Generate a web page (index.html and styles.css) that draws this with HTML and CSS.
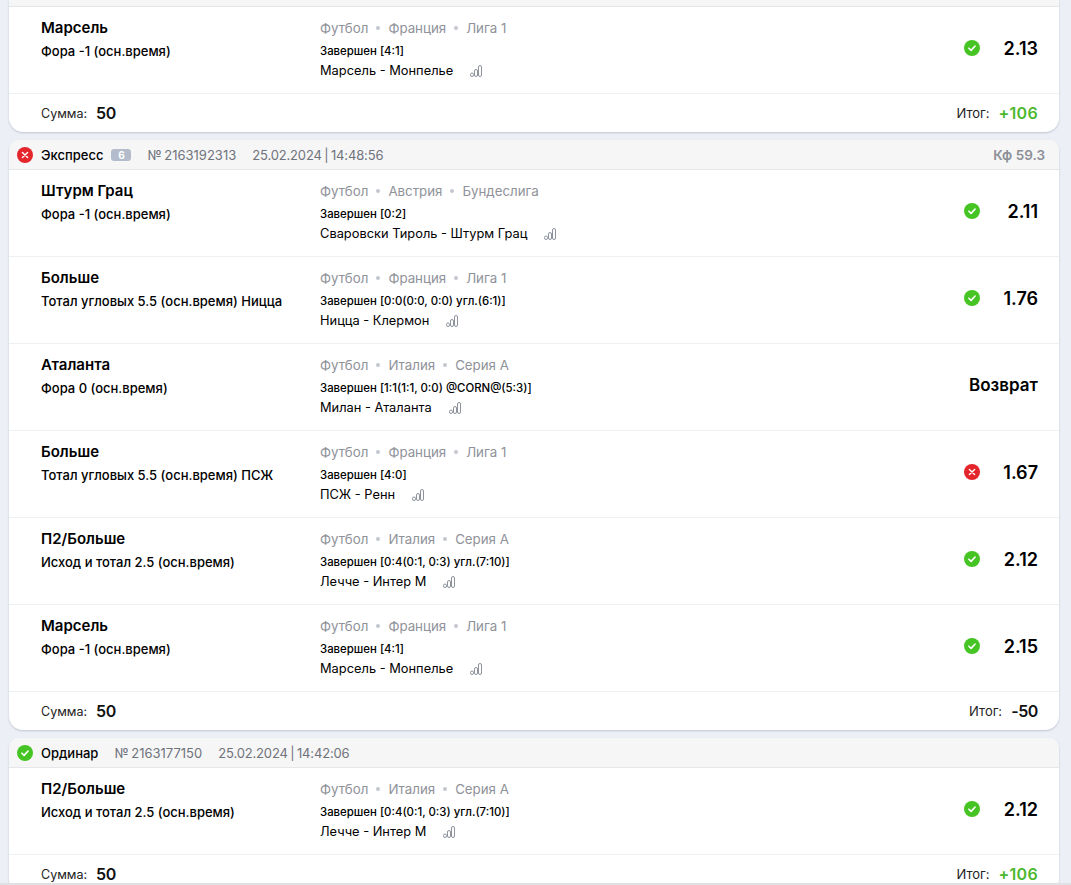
FILE: index.html
```html
<!DOCTYPE html>
<html lang="ru">
<head>
    <meta charset="UTF-8">
    <title>История ставок</title>
    <link rel="stylesheet" href="styles.css">
</head>
<body>
    <svg class="defs" width="0" height="0">
        <symbol id="win" viewBox="0 0 16 16">
            <circle cx="8" cy="8" r="8" fill="#46c423"/>
            <path d="M4.9 8.2l2.2 2.2 4-4.4" fill="none" stroke="#fff" stroke-width="1.6" stroke-linecap="round" stroke-linejoin="round"/>
        </symbol>
        <symbol id="lose" viewBox="0 0 16 16">
            <circle cx="8" cy="8" r="8" fill="#e4252b"/>
            <path d="M5.4 5.4l5.2 5.2M10.6 5.4l-5.2 5.2" fill="none" stroke="#fff" stroke-width="1.4" stroke-linecap="round"/>
        </symbol>
        <symbol id="stats" viewBox="0 0 12 12">
            <g fill="#fff" stroke="#8d929c" stroke-width="1">
                <rect x="0.5" y="8" width="3" height="3.5" rx="1.5"/>
                <rect x="4.5" y="4.5" width="3" height="7" rx="1.5"/>
                <rect x="8.5" y="0.5" width="3" height="11" rx="1.5"/>
            </g>
        </symbol>
    </svg>

    <div class="card">
        <div class="card-head card-head-cut"></div>
        <div class="row">
            <div class="bet"><div class="bet-name">Марсель</div><div class="bet-type">Фора -1 (осн.время)</div></div>
            <div class="event">
                <div class="path"><span>Футбол</span><i></i><span>Франция</span><i></i><span>Лига 1</span></div>
                <div class="status">Завершен [4:1]</div>
                <div class="teams">Марсель - Монпелье<svg class="stats"><use href="#stats"/></svg></div>
            </div>
            <svg class="mark"><use href="#win"/></svg>
            <div class="odds">2.13</div>
        </div>
        <div class="card-foot">
            <div class="sum"><span>Сумма:</span><b>50</b></div>
            <div class="sum"><span class="sum-result">Итог:</span><b class="plus">+106</b></div>
        </div>
    </div>

    <div class="card">
        <div class="card-head">
            <svg class="mark-head"><use href="#lose"/></svg>
            <span class="kind">Экспресс</span>
            <span class="badge">6</span>
            <span class="num">№ 2163192313</span>
            <span class="date">25.02.2024 | 14:48:56</span>
            <span class="total-odds">Кф 59.3</span>
        </div>
        <div class="row">
            <div class="bet"><div class="bet-name">Штурм Грац</div><div class="bet-type">Фора -1 (осн.время)</div></div>
            <div class="event">
                <div class="path"><span>Футбол</span><i></i><span>Австрия</span><i></i><span>Бундеслига</span></div>
                <div class="status">Завершен [0:2]</div>
                <div class="teams">Сваровски Тироль - Штурм Грац<svg class="stats"><use href="#stats"/></svg></div>
            </div>
            <svg class="mark"><use href="#win"/></svg>
            <div class="odds">2.11</div>
        </div>
        <div class="row">
            <div class="bet"><div class="bet-name">Больше</div><div class="bet-type">Тотал угловых 5.5 (осн.время) Ницца</div></div>
            <div class="event">
                <div class="path"><span>Футбол</span><i></i><span>Франция</span><i></i><span>Лига 1</span></div>
                <div class="status">Завершен [0:0(0:0, 0:0) угл.(6:1)]</div>
                <div class="teams">Ницца - Клермон<svg class="stats"><use href="#stats"/></svg></div>
            </div>
            <svg class="mark"><use href="#win"/></svg>
            <div class="odds">1.76</div>
        </div>
        <div class="row">
            <div class="bet"><div class="bet-name">Аталанта</div><div class="bet-type">Фора 0 (осн.время)</div></div>
            <div class="event">
                <div class="path"><span>Футбол</span><i></i><span>Италия</span><i></i><span>Серия А</span></div>
                <div class="status">Завершен [1:1(1:1, 0:0) @CORN@(5:3)]</div>
                <div class="teams">Милан - Аталанта<svg class="stats"><use href="#stats"/></svg></div>
            </div>
            <div class="odds odds-text">Возврат</div>
        </div>
        <div class="row">
            <div class="bet"><div class="bet-name">Больше</div><div class="bet-type">Тотал угловых 5.5 (осн.время) ПСЖ</div></div>
            <div class="event">
                <div class="path"><span>Футбол</span><i></i><span>Франция</span><i></i><span>Лига 1</span></div>
                <div class="status">Завершен [4:0]</div>
                <div class="teams">ПСЖ - Ренн<svg class="stats"><use href="#stats"/></svg></div>
            </div>
            <svg class="mark"><use href="#lose"/></svg>
            <div class="odds">1.67</div>
        </div>
        <div class="row">
            <div class="bet"><div class="bet-name">П2/Больше</div><div class="bet-type">Исход и тотал 2.5 (осн.время)</div></div>
            <div class="event">
                <div class="path"><span>Футбол</span><i></i><span>Италия</span><i></i><span>Серия А</span></div>
                <div class="status">Завершен [0:4(0:1, 0:3) угл.(7:10)]</div>
                <div class="teams">Лечче - Интер М<svg class="stats"><use href="#stats"/></svg></div>
            </div>
            <svg class="mark"><use href="#win"/></svg>
            <div class="odds">2.12</div>
        </div>
        <div class="row">
            <div class="bet"><div class="bet-name">Марсель</div><div class="bet-type">Фора -1 (осн.время)</div></div>
            <div class="event">
                <div class="path"><span>Футбол</span><i></i><span>Франция</span><i></i><span>Лига 1</span></div>
                <div class="status">Завершен [4:1]</div>
                <div class="teams">Марсель - Монпелье<svg class="stats"><use href="#stats"/></svg></div>
            </div>
            <svg class="mark"><use href="#win"/></svg>
            <div class="odds">2.15</div>
        </div>
        <div class="card-foot">
            <div class="sum"><span>Сумма:</span><b>50</b></div>
            <div class="sum"><span class="sum-result">Итог:</span><b>-50</b></div>
        </div>
    </div>

    <div class="card">
        <div class="card-head">
            <svg class="mark-head"><use href="#win"/></svg>
            <span class="kind">Ординар</span>
            <span class="num">№ 2163177150</span>
            <span class="date">25.02.2024 | 14:42:06</span>
        </div>
        <div class="row">
            <div class="bet"><div class="bet-name">П2/Больше</div><div class="bet-type">Исход и тотал 2.5 (осн.время)</div></div>
            <div class="event">
                <div class="path"><span>Футбол</span><i></i><span>Италия</span><i></i><span>Серия А</span></div>
                <div class="status">Завершен [0:4(0:1, 0:3) угл.(7:10)]</div>
                <div class="teams">Лечче - Интер М<svg class="stats"><use href="#stats"/></svg></div>
            </div>
            <svg class="mark"><use href="#win"/></svg>
            <div class="odds">2.12</div>
        </div>
        <div class="card-foot">
            <div class="sum"><span>Сумма:</span><b>50</b></div>
            <div class="sum"><span class="sum-result">Итог:</span><b class="plus">+106</b></div>
        </div>
    </div>
</body>
</html>
```
FILE: styles.css
```css
html, body {
    height: 885px;
    overflow: hidden;
}
body {
    margin: 0;
    padding: 0 12px 0 9px;
    background: #eceff5;
    font-family: Inter, "Noto Sans", sans-serif;
    color: #000;
    border-bottom: 2px solid #dfe1e5;
    box-sizing: border-box;
}
.defs {
    position: absolute;
}
.card {
    background: #fff;
    border-radius: 10px 10px 14px 14px;
    box-shadow: 0 1px 2px rgba(60, 70, 100, 0.25);
    margin-bottom: 8px;
    overflow: hidden;
}
.card-head {
    display: flex;
    align-items: center;
    height: 29px;
    background: #f6f6f7;
    border-bottom: 1px solid #e4e6ea;
    font-size: 13px;
    padding: 0 14px 0 8px;
}
.card-head-cut {
    height: 6px;
}
.card:first-child, .defs + .card {
    border-top-left-radius: 0;
    border-top-right-radius: 0;
}
.mark-head {
    width: 16px;
    height: 16px;
    margin-right: 8px;
}
.kind {
    font-weight: 500;
}
.badge {
    background: #b4bccb;
    color: #fff;
    border-radius: 3px;
    font-size: 10px;
    font-weight: 700;
    line-height: 12px;
    width: 20px;
    text-align: center;
    margin-left: 8px;
}
.num {
    color: #6f737b;
    margin-left: 16px;
    word-spacing: -1px;
}
.date {
    color: #6f737b;
    margin-left: 16px;
    letter-spacing: -0.15px;
    word-spacing: -1px;
}
.total-odds {
    margin-left: auto;
    color: #8c8f96;
    font-size: 13.5px;
    font-weight: 600;
}
.row {
    display: flex;
    align-items: center;
    height: 82px;
    padding: 0 21px 4px 32px;
    border-bottom: 1px solid #eef0f3;
}
.bet {
    width: 279px;
    align-self: flex-start;
    padding-top: 11px;
}
.bet-name {
    font-size: 15px;
    font-weight: 600;
    line-height: 20px;
}
.bet-type {
    font-size: 13px;
    font-weight: 500;
    line-height: 16px;
    margin-top: 5px;
}
.event {
    flex: 1;
    align-self: flex-start;
    padding-top: 13px;
}
.path {
    display: flex;
    align-items: center;
    font-size: 13.3px;
    line-height: 16px;
    color: #8f9299;
}
.path i {
    width: 4px;
    height: 4px;
    border-radius: 50%;
    background: #c3c7ce;
    margin: 0 8px;
}
.status {
    font-size: 11.4px;
    font-weight: 500;
    line-height: 14px;
    margin-top: 8px;
}
.teams {
    display: flex;
    align-items: center;
    font-size: 12.85px;
    line-height: 16px;
    margin-top: 5px;
}
.stats {
    width: 12px;
    height: 12px;
    margin-left: 17px;
}
.mark {
    width: 16px;
    height: 16px;
}
.odds {
    width: 58px;
    text-align: right;
    font-size: 18px;
    font-weight: 600;
}
.odds-text {
    width: auto;
    font-size: 17px;
}
.card-foot {
    display: flex;
    justify-content: space-between;
    align-items: center;
    height: 38px;
    padding: 0 21px 0 32px;
}
.sum {
    display: flex;
    align-items: center;
    font-size: 12.5px;
    color: #222;
}
.sum .sum-result {
    font-size: 13px;
}
.sum b {
    font-size: 16px;
    font-weight: 600;
    margin-left: 9px;
    color: #111;
    letter-spacing: -0.4px;
}
.sum b.plus {
    color: #4cb82e;
    letter-spacing: 0.3px;
}
```
